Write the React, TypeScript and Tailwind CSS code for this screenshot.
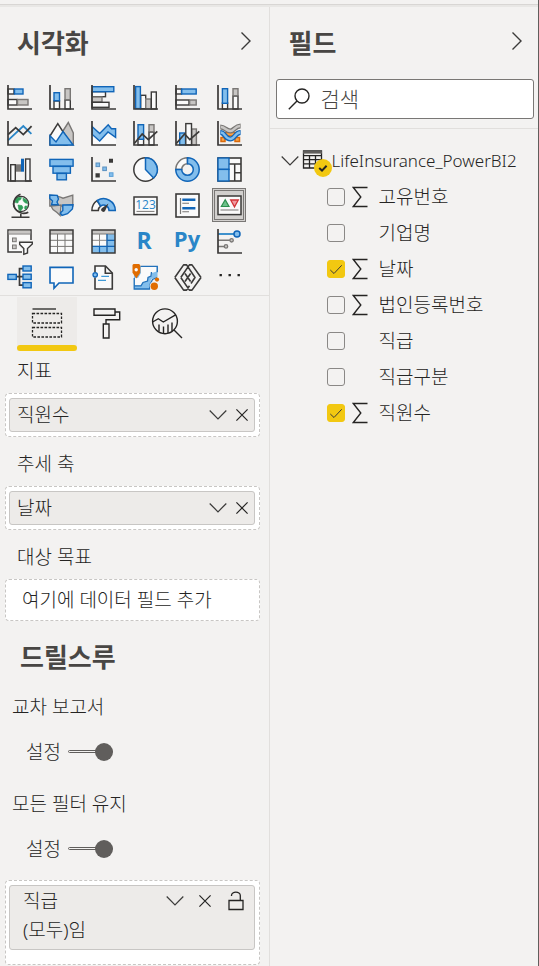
import React, { useState } from "react";

const INK = "#3b3a39";
const BLUE = "#1065b8";
const SKY = "#83beec";
const GREY = "#797775";
const ASH = "#c8c6c4";
const PAPER = "#fafafa";

type Box = { x: number; y: number; w: number; h: number };

function Cell({ x, y, w, h, fill, line }: Box & { fill: string; line: string }) {
  return <rect x={x} y={y} width={w} height={h} fill={fill} stroke={line} strokeWidth="1.4" />;
}
const Blue = (b: Box) => <Cell {...b} fill={SKY} line={BLUE} />;
const White = (b: Box) => <Cell {...b} fill={PAPER} line={INK} />;
const Grey = (b: Box) => <Cell {...b} fill={ASH} line={GREY} />;
const Axis = () => <path d="M2 1V25H26" fill="none" stroke={INK} strokeWidth="1.7" />;

function GridTable({ matrix }: { matrix?: boolean }) {
  return (
    <>
      <rect x="2" y="2" width="23" height="23" fill={PAPER} />
      {matrix && <path d="M17 6H25V25H2V18.5H17Z" fill={SKY} />}
      <rect x="2" y="2" width="23" height="4" fill={ASH} />
      <path d="M2 6H25" stroke={GREY} strokeWidth="1" />
      <path d="M9.5 6V25M17 6V25M2 12.3H25M2 18.4H25" fill="none" stroke={matrix ? "#8a8886" : GREY} strokeWidth="1" />
      {matrix && <path d="M17 6V25M2 18.4H25M17 12.3H25M9.5 18.4V25" fill="none" stroke={BLUE} strokeWidth="1.2" />}
      <rect x="2" y="2" width="23" height="23" fill="none" stroke={INK} strokeWidth="1.5" />
    </>
  );
}

const visuals: { name: string; art: React.ReactNode }[] = [
  { name: "누적 가로 막대형 차트", art: (<><White x={2} y={5} w={6} h={5} /><Blue x={8.5} y={5} w={8.5} h={5} /><White x={2} y={15.5} w={9} h={5.5} /><Grey x={11.5} y={15.5} w={10.5} h={5.5} /><Axis /></>) },
  { name: "누적 세로 막대형 차트", art: (<><White x={6} y={17} w={5.5} h={8} /><Blue x={6} y={8.7} w={5.5} h={8} /><White x={17} y={16} w={5.3} h={9} /><Grey x={17} y={4.7} w={5.3} h={11} /><Axis /></>) },
  { name: "묶은 가로 막대형 차트", art: (<><White x={2} y={7.7} w={13.5} h={5} /><Grey x={2} y={13} w={10} h={5} /><White x={2} y={18.3} w={17} h={5} /><Blue x={2.3} y={2.7} w={21.5} h={5} /><Axis /></>) },
  { name: "묶은 세로 막대형 차트", art: (<><White x={8.7} y={11.3} w={5} h={13.5} /><Grey x={13.7} y={15} w={5.5} h={10} /><White x={19.3} y={8} w={5} h={17} /><Blue x={3.6} y={2.6} w={4.8} h={22} /><Axis /></>) },
  { name: "100% 누적 가로 막대형 차트", art: (<><White x={2} y={5} w={5.5} h={5} /><Blue x={7.7} y={5} w={14.5} h={5} /><White x={2} y={16} w={13} h={5} /><Grey x={15.6} y={16} w={6.6} h={5} /><Axis /></>) },
  { name: "100% 누적 세로 막대형 차트", art: (<><White x={6.4} y={19} w={5.2} h={6} /><Blue x={6.4} y={4.7} w={5.2} h={14.6} /><White x={17} y={12} w={5} h={13} /><Grey x={17} y={4.7} w={5} h={7} /><Axis /></>) },

  { name: "꺾은선형 차트", art: (<><path d="M2 20.3L17.3 6L25.4 13.8" fill="none" stroke="#2a86c8" strokeWidth="1.8" /><path d="M2 14.7L9.7 7.6L17.3 14.6L25.6 6.2" fill="none" stroke={INK} strokeWidth="1.8" /><Axis /></>) },
  { name: "영역형 차트", art: (<><path d="M13 14L20.3 2.5L25.3 13V25H16Z" fill={ASH} stroke={GREY} strokeWidth="1.4" /><path d="M2 16L9.8 3.6L19 18V25H2Z" fill={PAPER} stroke={INK} strokeWidth="1.5" /><path d="M2 15.8L8 22L15 11.5L25.2 25H2Z" fill={SKY} stroke={BLUE} strokeWidth="1.4" /></>) },
  { name: "누적 영역형 차트", art: (<><path d="M2 14L9.7 21L18 12L26 17.5V25H2Z" fill={PAPER} /><path d="M2.3 6.7L9.7 13.5L18.2 4.8L21.5 8.7H25.6V17.4L18 12L9.7 21L2.3 14.5Z" fill={SKY} stroke={BLUE} strokeWidth="1.4" /><Axis /></>) },
  { name: "꺾은선형 및 누적 세로 막대형 차트", art: (<><White x={6} y={19} w={5.6} h={6} /><Blue x={6} y={4.7} w={5.6} h={14.6} /><White x={17} y={12} w={5} h={13} /><Grey x={17} y={4.7} w={5} h={7} /><path d="M2.3 23.5L10.2 14L16.3 19.6L25.3 11.3" fill="none" stroke={INK} strokeWidth="1.7" /><Axis /></>) },
  { name: "꺾은선형 및 묶은 세로 막대형 차트", art: (<><Blue x={5.7} y={13} w={5.8} h={12} /><Grey x={17.7} y={9} w={4.7} h={16} /><White x={11.8} y={3.6} w={5.7} h={21.4} /><path d="M2.3 23.5L10.6 14L15.8 19.6L25.3 11.3" fill="none" stroke={INK} strokeWidth="1.7" /><Axis /></>) },
  { name: "리본 차트", art: (<><path d="M5 17.5h4v4h-4zM19 17.5h4.5v4h-4.5zM9 12.5h11v3.5h-11z" fill="#f7a44c" stroke="#d9690a" strokeWidth="1.5" /><path d="M4.3 7C9 7 10 11 14.3 11C18 11 19 6 24.6 6" fill="none" stroke={GREY} strokeWidth="5" /><path d="M5 7C9 7 10 11 14.3 11C18 11 19 6 24 6" fill="none" stroke={ASH} strokeWidth="2.4" /><path d="M4.3 12.5C9 12.5 9 19 14.3 19C19 19 19 12.5 24.6 12.5" fill="none" stroke={BLUE} strokeWidth="5" /><path d="M5 12.5C9 12.5 9 19 14.3 19C19 19 19 12.5 24 12.5" fill="none" stroke={SKY} strokeWidth="2.4" /><Axis /></>) },

  { name: "폭포 차트", art: (<><White x={4.7} y={8.7} w={4.6} h={16.3} /><rect x="10" y="8.3" width="5" height="7.4" fill={GREY} /><rect x="15" y="2.7" width="3" height="13" fill={BLUE} /><White x={19.6} y={3} w={4.4} h={22} /><Axis /></>) },
  { name: "깔때기형", art: (<><Blue x={1.9} y={3.4} w={23.2} h={6.8} /><Blue x={5} y={10.4} w={17.4} h={6.8} /><Blue x={9} y={17.4} w={9.4} h={6.4} /></>) },
  { name: "분산형 차트", art: (<><rect x="6" y="7" width="3.6" height="3.6" fill={SKY} stroke="#5a8fbf" /><rect x="12.8" y="11" width="3.6" height="3.6" fill={SKY} stroke="#5a8fbf" /><rect x="19.4" y="16.8" width="3.6" height="3.6" fill={SKY} stroke="#5a9fd8" /><path d="M19 2.7h4v4h-4zM5.5 17.3h4.3v4.2H5.5z" fill={INK} /><Axis /></>) },
  { name: "원형 차트", art: (<><circle cx="13.5" cy="13.5" r="11.7" fill={PAPER} stroke={INK} strokeWidth="1.5" /><path d="M13.5 1.8A11.7 11.7 0 0 1 21.6 22L13.5 13.5Z" fill={SKY} stroke={BLUE} strokeWidth="1.5" /></>) },
  { name: "도넛형 차트", art: (<><path d="M1.8 13.5A11.7 11.7 0 0 1 13.5 1.8V7.7A5.8 5.8 0 0 0 7.7 13.5Z" fill={PAPER} stroke={GREY} strokeWidth="1.5" /><path d="M13.5 1.8A11.7 11.7 0 1 1 1.8 13.5H7.7A5.8 5.8 0 1 0 13.5 7.7Z" fill={SKY} stroke={BLUE} strokeWidth="1.5" /></>) },
  { name: "트리맵", art: (<><rect x="2" y="2" width="23" height="23" fill={PAPER} stroke={INK} strokeWidth="1.6" /><path d="M13 8H25M18.7 8V25M18.7 16.7H25" fill="none" stroke={INK} strokeWidth="1.5" /><Blue x={2} y={2} w={11} h={11.4} /><Blue x={2} y={13.4} w={11} h={11.6} /></>) },

  { name: "맵", art: (<><circle cx="15" cy="12" r="7.6" fill={PAPER} stroke={INK} strokeWidth="1.4" /><path d="M9 8l3-2.6 3.5.2-1 2.2-2 .8-.6 2.4-2.6-.4zM17 6l3.5 2 1.2 3.6-2.7-.8-1.8-2zM12 13l4 .6 1 2.2-2.4 3.2-1.8-1.4zM19 14l2.4.2-1.6 3-1.3-.8z" fill="#2f9e58" stroke="#2f9e58" strokeWidth=".6" /><path d="M14.5 2.3A9.8 9.8 0 1 0 22.3 20.2M14.8 22V25M5.5 25.2H23.5" fill="none" stroke={INK} strokeWidth="1.6" /></>) },
  { name: "등치 지역도", art: (<><path d="M1.8 3.3L9 3.8C10 4.6 11 5 12.5 5.2L15 6.2L24.8 3.2V14H1.8Z" fill={ASH} stroke={GREY} strokeWidth="1.3" /><path d="M3 14L5 17.5L9 20.5L12.2 23.5L13 13Z" fill={ASH} stroke={GREY} strokeWidth="1.3" /><path d="M1.8 3L9.2 3.4L10.5 7L9 10L10.3 12.8H3.5L4.5 9L1.8 6.5Z" fill={SKY} stroke={BLUE} strokeWidth="1.4" /><path d="M14.8 13L25 12.7L24.4 17L19.5 21.7L14 23.5L12.3 21L14.8 18.5Z" fill={SKY} stroke={BLUE} strokeWidth="1.4" /></>) },
  { name: "계기", art: (<><path d="M1.9 18.5A11.8 11.8 0 0 1 7 8.7L10.6 14.1A5.4 5.4 0 0 0 8.3 18.5Z" fill={PAPER} stroke={INK} strokeWidth="1.5" /><path d="M7.3 8.5A11.8 11.8 0 0 1 25.3 18.5H19A5.4 5.4 0 0 0 10.6 14Z" fill={SKY} stroke={BLUE} strokeWidth="1.5" /><path d="M18.5 11.5L11.8 16.3A2.1 2.1 0 1 0 15.3 18.5Z" fill={INK} /></>) },
  { name: "카드", art: (<><rect x="2" y="5" width="23" height="17.6" fill={PAPER} stroke={INK} strokeWidth="1.5" /><text x="13.5" y="16.9" textAnchor="middle" fontSize="12" fontWeight="400" fill="#2a86c8" fontFamily="Open Sans, Noto Sans, sans-serif">123</text><path d="M4.5 19.4H22.5" stroke={GREY} strokeWidth="1" /></>) },
  { name: "여러 행 카드", art: (<><rect x="2" y="2" width="23" height="23" fill={PAPER} stroke={INK} strokeWidth="1.6" /><path d="M6.5 6V22" stroke={GREY} strokeWidth="1.2" /><path d="M8.3 7.7H21.4M8.3 16.2H21.4" stroke={BLUE} strokeWidth="2.5" /><path d="M8.3 11.2H15M8.3 19.8H15" stroke={GREY} strokeWidth="1.1" /></>) },
  { name: "KPI", art: (<><rect x="2" y="4" width="23" height="18.6" fill={PAPER} stroke={INK} strokeWidth="1.5" /><path d="M5.3 14.5L9.2 7.8L13 14.5Z" fill="#6dc08a" stroke="#2c8f4e" strokeWidth="1.2" /><path d="M14.7 8L18.5 14.8L22.3 8Z" fill="#f19aa0" stroke="#d13438" strokeWidth="1.3" /><path d="M4.5 18H22.5" stroke={GREY} strokeWidth="1" /></>) },

  { name: "슬라이서", art: (<><rect x="2" y="2" width="23" height="22" fill={PAPER} stroke={INK} strokeWidth="1.5" /><rect x="2.7" y="2.7" width="21.6" height="2.8" fill={ASH} /><path d="M2 6H25" stroke={GREY} /><rect x="6.5" y="10" width="3.7" height="3.7" fill={ASH} stroke={GREY} /><rect x="6.5" y="17" width="3.7" height="3.7" fill={ASH} stroke={GREY} /><path d="M12 12H27V27H16V21L12 18Z" fill="#f3f2f1" /><path d="M13.7 14.3H26.3V16L21.5 20.6V25L17.8 26.3V20.6L13.7 16.4Z" fill={PAPER} stroke={INK} strokeWidth="1.4" /></>) },
  { name: "테이블", art: <GridTable /> },
  { name: "행렬", art: <GridTable matrix /> },
  { name: "R 스크립트 시각적 개체", art: <text x="12" y="21" textAnchor="middle" fontSize="23" fontWeight="700" fill="#2a86c8" fontFamily="Open Sans, Noto Sans, sans-serif">R</text> },
  { name: "Python 시각적 개체", art: <text x="13" y="19" textAnchor="middle" fontSize="22" fontWeight="700" fill="#2a86c8" fontFamily="Open Sans, Noto Sans, sans-serif">Py</text> },
  { name: "주요 영향 요인", art: (<><path d="M2 6H18" stroke="#2a86c8" strokeWidth="1.8" /><path d="M2 12.3H14M2 18.4H9" stroke={GREY} strokeWidth="1.5" /><circle cx="21" cy="6" r="3" fill={SKY} stroke={BLUE} strokeWidth="1.5" /><circle cx="15.6" cy="12.3" r="1.7" fill={ASH} stroke={GREY} strokeWidth="1.3" /><circle cx="10" cy="18.4" r="1.7" fill={ASH} stroke={GREY} strokeWidth="1.3" /><Axis /></>) },

  { name: "분해 트리", art: (<><path d="M10 12.7H17M17 4.6H13.5V21.2H17" fill="none" stroke={INK} strokeWidth="1.7" /><Blue x={1.9} y={10.4} w={8.4} h={5} /><Blue x={17} y={2} w={8.2} h={5} /><Blue x={17} y={10.2} w={8.2} h={5.2} /><Blue x={17} y={18.6} w={8.2} h={5.2} /></>) },
  { name: "질문 및 답변", art: <path d="M2 3.4H25V19H11L6 24.3V19H2Z" fill={PAPER} stroke={BLUE} strokeWidth="1.6" /> },
  { name: "스마트 설명", art: (<><path d="M5 2H15.5L22.3 9V25H5Z" fill={PAPER} stroke={INK} strokeWidth="1.6" /><path d="M15.3 2V9.2H22.3" fill="none" stroke={INK} strokeWidth="1.6" /><path d="M11.3 12.4H19M8 16.4H16" stroke="#3f9ad6" strokeWidth="1.2" /><rect x="3" y="8" width="3" height="5.5" fill={PAPER} /><circle cx="5.2" cy="10.8" r="2.2" fill={SKY} stroke={BLUE} strokeWidth="1.3" /></>) },
  { name: "ArcGIS Maps", art: (<><path d="M2 2.3H25.5V13L19 15L17.5 25.2H2Z" fill={SKY} /><path d="M9 3H24.5V7.5L20 9L19.5 12L16 13.5L15.5 17L11 18.5L9 21.5H3V14H6L9 9Z" fill={PAPER} /><path d="M8.5 2.3H25.3V8.2M2.2 14V25H17.5L18.3 20L20.5 15.5L25 13.5M19.5 8L19 12L16 13.5L15.5 17L11 18.5L9 21.8H2.5" fill="none" stroke="#2372bb" strokeWidth="1.3" /><path d="M.5 1L1.5 0H7L8.2 1V8.7L4.4 14.5L.5 8.7Z" fill="#e06c00" /><circle cx="4.2" cy="5.7" r="1.7" fill={PAPER} /><circle cx="22.3" cy="22" r="4.6" fill="#f3f2f1" /><circle cx="22.3" cy="22.2" r="3.7" fill="#e06c00" /><circle cx="25" cy="15.6" r="2.1" fill="#e06c00" /></>) },
  { name: "Power Apps", art: (<path d="M.8 13.5L9.6 .9H12.6L21 13.5L17 19.5M.8 13.5L9.6 26.1H12.6L15.5 21.8M27 13.5L18 .9H15.4L6.8 13.5M27 13.5L18 26.1H15.4L6.8 13.5M11 9.5L16.6 17.5M16.6 9.5L11 17.5" fill="none" stroke={INK} strokeWidth="1.6" strokeLinejoin="round" />) },
  { name: "추가 시각적 개체", art: (<path d="M3.5 10h2.4v2.2H3.5zM12.5 10h2.4v2.2h-2.4zM21.5 10h2.4v2.2h-2.4z" fill="#252423" />) },
];

function ChevronRight() {
  return (
    <svg className="h-5 w-3" viewBox="0 0 12 20" fill="none" stroke="#3b3a39" strokeWidth="1.4">
      <path d="M1.5 1.5L10 10L1.5 18.5" />
    </svg>
  );
}

function ChevronDown() {
  return (
    <svg className="h-3 w-[18px] shrink-0" viewBox="0 0 18 12" fill="none" stroke="#3b3a39" strokeWidth="1.2">
      <path d="M.7 1.5L9 9.8L17.3 1.5" />
    </svg>
  );
}

function Cross() {
  return (
    <svg className="size-3" viewBox="0 0 12 12" fill="none" stroke="#252423" strokeWidth="1.2">
      <path d="M.4 .4L11.6 11.6M11.6 .4L.4 11.6" />
    </svg>
  );
}

function PaneHeader({ title }: { title: string }) {
  return (
    <header className="flex h-[72px] items-center justify-between">
      <h2 className="text-[26px] font-bold text-[#484644]">{title}</h2>
      <button aria-label={`${title} 접기`} className="mb-1 flex">
        <ChevronRight />
      </button>
    </header>
  );
}

function FieldWell({ label, field }: { label: string; field?: string }) {
  return (
    <section>
      <h3 className="flex h-[49px] items-center pt-1 pl-[17px]">{label}</h3>
      {field ? (
        <div className="mr-[9px] ml-[5px] rounded-sm border border-dashed border-[#c8c6c4] bg-white py-1 pr-1 pl-[3px]">
          <div className="flex h-[34px] items-center rounded-[3px] border border-[#c8c6c4] bg-[#edebe9] pr-[6px] pl-[7px]">
            <span className="flex-1">{field}</span>
            <button aria-label={`${field} 메뉴`} className="mr-[9px] flex"><ChevronDown /></button>
            <button aria-label={`${field} 제거`} className="flex"><Cross /></button>
          </div>
        </div>
      ) : (
        <div className="mr-[9px] ml-[5px] flex h-[42px] items-center rounded-sm border border-dashed border-[#c8c6c4] bg-white pl-4">
          여기에 데이터 필드 추가
        </div>
      )}
    </section>
  );
}

function DrillSwitch({ title }: { title: string }) {
  const [on, setOn] = useState(true);
  return (
    <section className="mb-[7px]">
      <h3 className="flex h-[45px] items-center pl-3">{title}</h3>
      <label className="flex h-[45px] items-center pl-[26px]">
        설정
        <span className="ml-[7px] grid">
          <input
            type="checkbox"
            role="switch"
            aria-label={title}
            checked={on}
            onChange={() => setOn(!on)}
            className="h-[18px] w-[45px] appearance-none [grid-area:1/1]"
          />
          <svg className="pointer-events-none h-[18px] w-[45px] [grid-area:1/1]" viewBox="0 0 45 18">
            <rect x=".5" y="7.5" width="44" height="2" rx="1" fill="#f3f2f1" stroke="#605e5c" />
            <circle cx={on ? 36 : 9} cy="9" r="9" fill="#605e5c" />
          </svg>
        </span>
      </label>
    </section>
  );
}

const fields = [
  { name: "고유번호", sum: true, on: false },
  { name: "기업명", sum: false, on: false },
  { name: "날짜", sum: true, on: true },
  { name: "법인등록번호", sum: true, on: false },
  { name: "직급", sum: false, on: false },
  { name: "직급구분", sum: false, on: false },
  { name: "직원수", sum: true, on: true },
];

function FieldRow({ name, sum, on }: { name: string; sum: boolean; on: boolean }) {
  const [checked, setChecked] = useState(on);
  return (
    <li>
      <label className="flex h-9 items-center pl-[57px]">
        <span className="grid">
          <input
            type="checkbox"
            checked={checked}
            onChange={() => setChecked(!checked)}
            className="size-[18px] appearance-none rounded-[3px] border border-[#8a8886] [grid-area:1/1] checked:border-[#f2c811] checked:bg-[#f2c811]"
          />
          {checked && (
            <svg className="pointer-events-none size-[18px] [grid-area:1/1]" viewBox="0 0 18 18" fill="none" stroke="#3b3a39">
              <path d="M3.3 10L7 13.5L14.7 5.3" />
            </svg>
          )}
        </span>
        <svg className="mx-[7px] h-[22px] w-4" viewBox="0 0 16 22" fill="none" stroke={sum ? "#252423" : "none"} strokeWidth="1.4">
          <path d="M15.5 1.5H1.3L8.8 11L1.3 20.5H15.5" />
        </svg>
        <span className="ml-1">{name}</span>
      </label>
    </li>
  );
}

export default function App() {
  return (
    <div className="flex min-h-screen flex-col overflow-hidden bg-[#f3f2f1] font-['Noto_Sans','Noto_Sans_CJK_KR',sans-serif] text-[19px] leading-7 font-light text-[#252423]">
      <div className="h-[7px] border-r border-[#605e5c] pt-1">
        <div className="h-[3px] border-t border-[#d8d6d4] bg-[#e8e7e5]" />
      </div>
      <div className="flex flex-1">
        <aside className="w-1/2 border-r border-[#e1dfdd]">
          <div className="pr-[17px] pl-[17px]">
            <PaneHeader title="시각화" />
          </div>
          <div className="grid grid-cols-[repeat(6,34px)] gap-x-2 gap-y-0.5 border-b border-[#e1dfdd] pt-px pb-px pl-0.5">
            {visuals.map((v) => (
              <button
                key={v.name}
                aria-label={v.name}
                className={
                  v.name === "KPI"
                    ? "flex size-[34px] items-center justify-center border-3 border-double border-[#797775] bg-[#d2d0ce]"
                    : "flex size-[34px] items-center justify-center"
                }
              >
                <svg className="size-[26px] shrink-0 overflow-visible" viewBox="0 0 26 26">{v.art}</svg>
              </button>
            ))}
          </div>

          <nav className="flex pt-px pl-[17px]">
            <button aria-label="필드" className="flex h-[54px] w-[60px] flex-col bg-[#edebe9]">
              <svg className="mt-[10px] ml-[14px] h-8 w-8" viewBox="0 0 32 32" fill="none" stroke="#252423" strokeWidth="1.3">
                <path d="M1.5 2H25" />
                <path d="M1.5 6.5H30.5V16H1.5ZM1.5 20.5H30.5V30H1.5Z" strokeDasharray="2.6 1.4" />
              </svg>
              <span className="mt-[6px] h-[6px] w-full rounded-full bg-[#f2c811]" />
            </button>
            <button aria-label="서식" className="flex h-[54px] w-[60px] justify-center pt-[10px]">
              <svg className="h-8 w-7" viewBox="0 0 28 32" fill="none" stroke="#252423" strokeWidth="1.4">
                <path d="M1 2H22V8.3H1ZM22 5H26.7V12.8H13V17M10.3 17H16V31H10.3Z" />
              </svg>
            </button>
            <button aria-label="분석" className="flex h-[54px] w-[60px] justify-center pt-[10px]">
              <svg className="h-8 w-8" viewBox="0 0 32 32" fill="none" stroke="#252423" strokeWidth="1.4">
                <circle cx="14" cy="14.3" r="12.4" />
                <path d="M1.6 15L7.3 11.7L12.3 15L25 7.6M23 23L31 31M8 17.5V24.5M12.5 19.5V26.5M17 17.5V26M21 15.5V24" />
              </svg>
            </button>
          </nav>

          <div className="-mt-[7px]">
            <FieldWell label="지표" field="직원수" />
            <FieldWell label="추세 축" field="날짜" />
            <FieldWell label="대상 목표" />
          </div>

          <h2 className="flex h-[63px] items-center pt-2 pl-5 text-[26px] font-bold text-[#484644]">드릴스루</h2>
          <DrillSwitch title="교차 보고서" />
          <DrillSwitch title="모든 필터 유지" />

          <div className="mt-[9px] mr-[9px] ml-[5px] rounded-sm border border-dashed border-[#c8c6c4] bg-white pt-1 pr-1 pb-[14px] pl-[3px]">
            <div className="rounded-[3px] border border-[#c8c6c4] bg-[#edebe9] pr-[10px] pb-1 pl-[13px]">
              <div className="flex h-[30px] items-center">
                <span className="flex-1">직급</span>
                <button aria-label="직급 메뉴" className="mr-[15px] flex"><ChevronDown /></button>
                <button aria-label="직급 제거" className="mr-[17px] flex"><Cross /></button>
                <button aria-label="필터 잠금" className="flex">
                  <svg className="h-5 w-4" viewBox="0 0 16 20" fill="none" stroke="#252423" strokeWidth="1.3">
                    <path d="M1 9.5H15V18.5H1ZM3.5 5V4.5C3.5 0 12.3 0 12.3 4.5V9.5" />
                  </svg>
                </button>
              </div>
              <p className="h-[29px]">(모두)임</p>
            </div>
          </div>
        </aside>

        <aside className="flex-1 border-r border-[#605e5c]">
          <div className="pr-[15px] pl-[19px]">
            <PaneHeader title="필드" />
          </div>
          <div className="border-b border-[#e1dfdd] pr-1 pb-[9px] pl-[6px]">
            <label className="flex h-10 items-center rounded-[3px] border border-[#797775] bg-white pl-[11px]">
              <svg className="size-[22px] shrink-0" viewBox="0 0 22 22" fill="none" stroke="#252423" strokeWidth="1.4">
                <circle cx="14" cy="8" r="7" />
                <path d="M9 13L.8 21.2" />
              </svg>
              <input
                type="search"
                aria-label="검색"
                placeholder="검색"
                className="ml-[11px] w-full min-w-0 bg-transparent text-[21px] outline-none placeholder:text-[#484644]"
              />
            </label>
          </div>
          <div className="pt-[14px]">
            <button className="flex h-9 w-full items-center pl-[11px] text-[17px] whitespace-nowrap">
              <ChevronDown />
              <svg className="mt-1 ml-[3px] h-[27px] w-[30px] shrink-0" viewBox="0 0 30 27">
                <path d="M1.5 1H19.5V18H1.5ZM1.5 5.7H19.5M1.5 9.7H19.5M1.5 13.8H19.5M7.5 5V18M13.5 5V18" fill="none" stroke="#252423" strokeWidth="1.3" />
                <path d="M1 1.2H20V3.6H1Z" fill="#605e5c" />
                <circle cx="21" cy="18" r="9" fill="#f2c811" />
                <path d="M17.2 18L20 20.6L24.6 15.8" fill="none" stroke="#252423" strokeWidth="2" />
              </svg>
              <span>LifeInsurance_PowerBI2</span>
            </button>
            <ul>
              {fields.map((f) => (
                <FieldRow key={f.name} {...f} />
              ))}
            </ul>
          </div>
        </aside>
      </div>
    </div>
  );
}
